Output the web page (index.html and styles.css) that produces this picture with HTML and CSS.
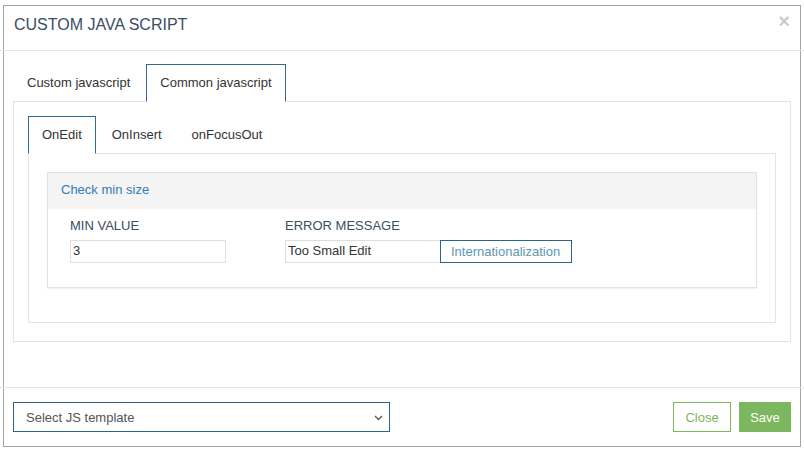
FILE: index.html
```html
<!DOCTYPE html>
<html>
<head>
<meta charset="utf-8">
<link rel="stylesheet" href="styles.css">
</head>
<body>
<div class="modal">
  <div class="modal-header">
    <h4 class="modal-title">CUSTOM JAVA SCRIPT</h4>
    <span class="close">&times;</span>
  </div>
  <div class="modal-body">
    <ul class="tabs">
      <li class="tab">Custom javascript</li>
      <li class="tab active">Common javascript</li>
    </ul>
    <div class="pane outer-pane">
      <ul class="tabs">
        <li class="tab active">OnEdit</li>
        <li class="tab">OnInsert</li>
        <li class="tab">onFocusOut</li>
      </ul>
      <div class="pane inner-pane">
        <div class="panel">
          <div class="panel-heading">Check min size</div>
          <div class="panel-body">
            <div class="field field-min">
              <label class="label">MIN VALUE</label>
              <div class="input">3</div>
            </div>
            <div class="field">
              <label class="label">ERROR MESSAGE</label>
              <div class="input-row">
                <div class="input">Too Small Edit</div>
                <button class="btn-i18n">Internationalization</button>
              </div>
            </div>
          </div>
        </div>
      </div>
    </div>
  </div>
  <div class="modal-footer">
    <div class="select-wrap">
      <select class="select"><option>Select JS template</option></select>
      <svg class="chev" width="9" height="6" viewBox="0 0 9 6"><path d="M1 1 L4.5 4.5 L8 1" fill="none" stroke="#555" stroke-width="1.3"/></svg>
    </div>
    <div class="actions">
      <button class="btn btn-close">Close</button>
      <button class="btn btn-save">Save</button>
    </div>
  </div>
</div>
</body>
</html>
```

FILE: styles.css
```css
* { box-sizing: border-box; }
html, body { margin: 0; padding: 0; background: #fff; }
body {
  font-family: "Liberation Sans", Arial, sans-serif;
  font-size: 13px;
  color: #333;
  width: 804px;
  height: 450px;
  overflow: hidden;
}
.modal {
  margin: 5px 0 0 3px;
  width: 798px;
  height: 442px;
  border: 1px solid #a3a3a3;
  display: flex;
  flex-direction: column;
}
.modal-header {
  margin: 0 -5px 0 -4px;
  height: 45px;
  border-bottom: 1px solid #e5e5e5;
  display: flex;
  justify-content: space-between;
  align-items: flex-start;
  padding: 0 15px 0 14px;
}
.modal-title {
  margin: 0;
  padding-top: 9px;
  font-size: 16px;
  line-height: 20px;
  font-weight: normal;
  color: #3a4e62;
}
.close {
  margin-top: 5px;
  font-size: 20px;
  line-height: 20px;
  font-weight: bold;
  color: #000;
  opacity: 0.2;
}
.modal-body {
  flex: 1;
  padding: 13px 9px 0 9px;
}
.tabs {
  list-style: none;
  margin: 0 0 -1px 0;
  padding: 0;
  display: flex;
  position: relative;
  z-index: 1;
}
.tab {
  margin-right: 2px;
  padding: 8px 13px;
  line-height: 20px;
  height: 38px;
  border: 1px solid transparent;
  color: #333;
  white-space: nowrap;
}
.tab.active {
  border-color: #2e6a9c;
  border-bottom-color: #fff;
  background: #fff;
}
.pane {
  border: 1px solid #e3e3e3;
}
.outer-pane {
  padding: 14px 14px 18px 14px;
}
.inner-pane {
  padding: 18px 18px 34px 18px;
}
.panel {
  border: 1px solid #e2e2e2;
  box-shadow: 0 1px 1px rgba(0,0,0,0.05);
}
.panel-heading {
  background: #f4f4f4;
  padding: 7px 13px 9px 13px;
  line-height: 20px;
  color: #337ab7;
}
.panel-body {
  padding: 8px 22px 24px 22px;
  display: flex;
}
.field {
  display: flex;
  flex-direction: column;
}
.field-min {
  width: 215px;
}
.label {
  line-height: 18px;
  margin-bottom: 5px;
  color: #3a4e62;
}
.input {
  width: 156px;
  height: 23px;
  border: 1px solid #dedede;
  padding: 0 2px;
  line-height: 20px;
  color: #333;
}
.input-row {
  display: flex;
}
.btn-i18n {
  width: 132px;
  height: 23px;
  margin-left: -1px;
  border: 1px solid #2a6496;
  background: #fff;
  padding: 0 0 0 10px;
  text-align: left;
  font-family: inherit;
  font-size: 13px;
  color: #5e97b2;
}
.modal-footer {
  margin: 0 -5px 0 -4px;
  height: 59px;
  border-top: 1px solid #e5e5e5;
  padding: 14px 14px 0 13px;
  display: flex;
  justify-content: space-between;
  align-items: flex-start;
}
.select-wrap {
  position: relative;
  width: 377px;
  height: 30px;
}
.select {
  -webkit-appearance: none;
  appearance: none;
  width: 100%;
  height: 30px;
  border: 1px solid #2a6496;
  border-radius: 0;
  background: #fff;
  padding: 0 12px;
  font-family: inherit;
  font-size: 13px;
  color: #555;
  outline: none;
}
.chev {
  position: absolute;
  right: 7px;
  top: 13px;
  pointer-events: none;
}
.actions {
  display: flex;
  gap: 8px;
}
.btn {
  height: 30px;
  padding: 0 10px;
  font-family: inherit;
  font-size: 13px;
  border: 1px solid #7cb65e;
  border-radius: 0;
  cursor: pointer;
}
.btn-close {
  width: 58px;
  background: #fff;
  color: #7cb65e;
}
.btn-save {
  width: 52px;
  background: #7cb65e;
  color: #fff;
}
```
